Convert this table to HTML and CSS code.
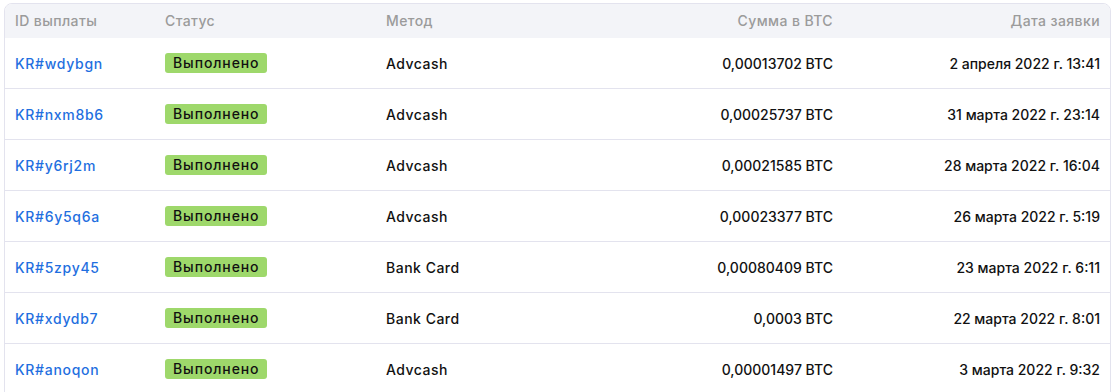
FILE: index.html
```html
<!DOCTYPE html>
<html lang="ru">
<head>
<meta charset="utf-8">
<link rel="stylesheet" href="styles.css">
</head>
<body>
<div class="card">
<table class="payouts">
<colgroup>
<col class="c-id"><col class="c-status"><col class="c-method"><col class="c-sum"><col class="c-date">
</colgroup>
<thead>
<tr><th>ID выплаты</th><th>Статус</th><th>Метод</th><th class="r">Сумма в BTC</th><th class="r">Дата заявки</th></tr>
</thead>
<tbody>
<tr><td><a class="id">KR#wdybgn</a></td><td><span class="badge">Выполнено</span></td><td class="method">Advcash</td><td class="r">0,00013702 BTC</td><td class="r">2 апреля 2022 г. 13:41</td></tr>
<tr><td><a class="id">KR#nxm8b6</a></td><td><span class="badge">Выполнено</span></td><td class="method">Advcash</td><td class="r">0,00025737 BTC</td><td class="r">31 марта 2022 г. 23:14</td></tr>
<tr><td><a class="id">KR#y6rj2m</a></td><td><span class="badge">Выполнено</span></td><td class="method">Advcash</td><td class="r">0,00021585 BTC</td><td class="r">28 марта 2022 г. 16:04</td></tr>
<tr><td><a class="id">KR#6y5q6a</a></td><td><span class="badge">Выполнено</span></td><td class="method">Advcash</td><td class="r">0,00023377 BTC</td><td class="r">26 марта 2022 г. 5:19</td></tr>
<tr><td><a class="id">KR#5zpy45</a></td><td><span class="badge">Выполнено</span></td><td class="method">Bank Card</td><td class="r">0,00080409 BTC</td><td class="r">23 марта 2022 г. 6:11</td></tr>
<tr><td><a class="id">KR#xdydb7</a></td><td><span class="badge">Выполнено</span></td><td class="method">Bank Card</td><td class="r">0,0003 BTC</td><td class="r">22 марта 2022 г. 8:01</td></tr>
<tr><td><a class="id">KR#anoqon</a></td><td><span class="badge">Выполнено</span></td><td class="method">Advcash</td><td class="r">0,00001497 BTC</td><td class="r">3 марта 2022 г. 9:32</td></tr>
</tbody>
</table>
</div>
</body>
</html>
```
FILE: styles.css
```css
html, body {
  margin: 0;
  background: #ffffff;
}
body {
  padding: 3px 1px 0 4px;
  font-family: "Inter", "Noto Sans", sans-serif;
  font-size: 14px;
  color: #111111;
}
.card {
  border: 1px solid #e3e3ee;
  border-radius: 8px 8px 0 0;
  overflow: hidden;
}
.payouts {
  width: 100%;
  border-collapse: collapse;
  table-layout: fixed;
}
.c-id { width: 150px; }
.c-status { width: 221px; }
.c-method { width: 224px; }
.c-sum { width: 243px; }
.c-date { width: 267px; }
th {
  background: #f3f4f8;
  color: #9b9b9b;
  font-weight: 500;
  text-align: left;
  height: 32px;
  padding: 0 10px 2px;
  font-size: 14px;
  letter-spacing: 0.4px;
}
td {
  height: 50px;
  padding: 0 10px;
  border-top: 1px solid #e3e3ee;
  font-weight: 500;
  white-space: nowrap;
}
tbody tr:first-child td { border-top: none; }
.r { text-align: right; }
.method { letter-spacing: 0.5px; }
.id {
  color: #1f6fe0;
  text-decoration: none;
  letter-spacing: 0.7px;
}
.badge {
  display: inline-block;
  background: #9ed86b;
  color: #111111;
  border-radius: 3px;
  height: 20px;
  line-height: 20px;
  padding: 0 8px;
  letter-spacing: 0.9px;
}
```
